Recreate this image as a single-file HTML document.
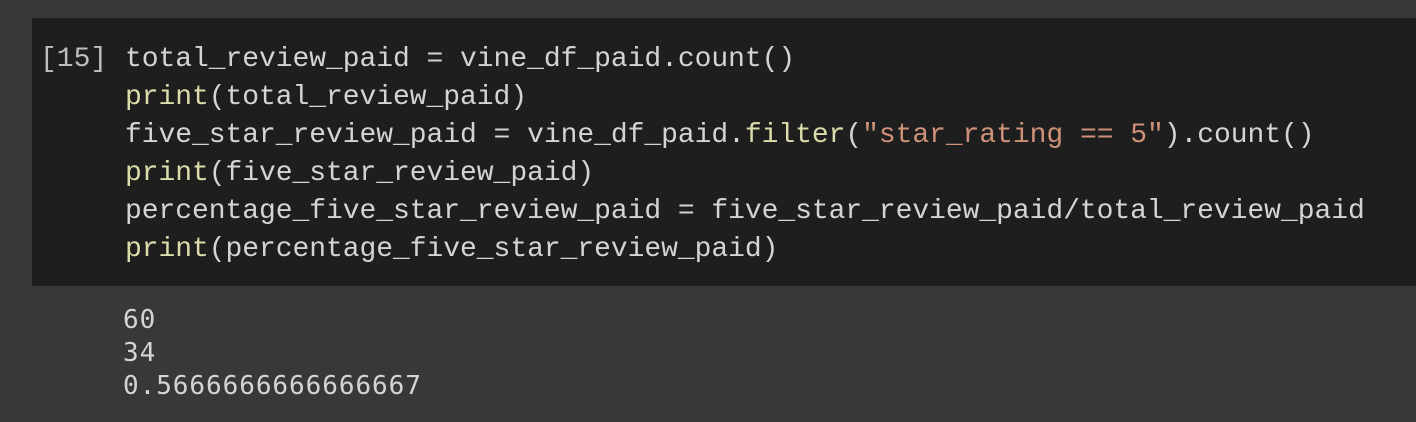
<!DOCTYPE html>
<html><head><meta charset="utf-8"><style>
html,body{margin:0;padding:0;width:1416px;height:422px;background:#383838;overflow:hidden}
.box{position:absolute;left:32px;top:18px;width:1384px;height:268px;background:#1e1e1e}
.code{position:absolute;left:125px;top:41px;font:28px/38px "Liberation Mono",monospace;color:#d4d4d4;white-space:pre;letter-spacing:-0.05px}
.num{position:absolute;left:40px;top:41px;font:28px/38px "Liberation Mono",monospace;color:#bdbdbd;white-space:pre}
.f{color:#dcdcaa}.s{color:#ce9178}
.out{position:absolute;left:123px;top:304px;font:26px/33px "DejaVu Sans Mono",monospace;color:#d4d4d4;white-space:pre;letter-spacing:0.95px}
</style></head><body>
<div class="box"></div>
<div class="num">[15]</div>
<div class="code">total_review_paid = vine_df_paid.count()
<span class="f">print</span>(total_review_paid)
five_star_review_paid = vine_df_paid.<span class="f">filter</span>(<span class="s">"star_rating == 5"</span>).count()
<span class="f">print</span>(five_star_review_paid)
percentage_five_star_review_paid = five_star_review_paid/total_review_paid
<span class="f">print</span>(percentage_five_star_review_paid)</div>
<div class="out">60
34
0.5666666666666667</div>
</body></html>
